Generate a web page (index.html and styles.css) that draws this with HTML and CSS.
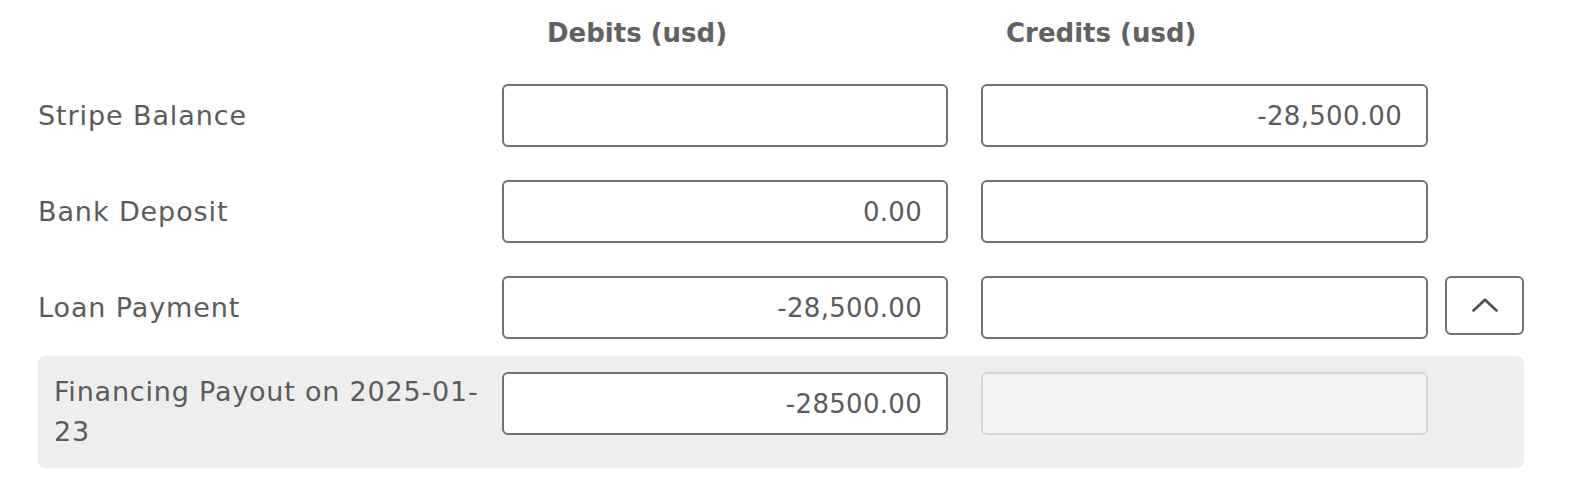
FILE: index.html
```html
<!DOCTYPE html>
<html lang="en">
<head>
<meta charset="utf-8">
<title>Ledger entries</title>
<link rel="stylesheet" href="styles.css">
</head>
<body>
<div class="ledger">
  <div class="row head">
    <div></div>
    <div class="colhead debit">Debits (usd)</div>
    <div class="colhead credit">Credits (usd)</div>
    <div></div>
  </div>

  <div class="row">
    <div class="label">Stripe Balance</div>
    <div class="cell"><input class="amount" type="text" value=""></div>
    <div class="cell credit"><input class="amount" type="text" value="-28,500.00"></div>
    <div></div>
  </div>

  <div class="row">
    <div class="label">Bank Deposit</div>
    <div class="cell"><input class="amount" type="text" value="0.00"></div>
    <div class="cell credit"><input class="amount" type="text" value=""></div>
    <div></div>
  </div>

  <div class="row">
    <div class="label">Loan Payment</div>
    <div class="cell"><input class="amount" type="text" value="-28,500.00"></div>
    <div class="cell credit"><input class="amount" type="text" value=""></div>
    <div class="cell"><button class="toggle" type="button" aria-label="Collapse">
      <svg width="26" height="14" viewBox="0 0 26 14"><polyline points="1.5,12.5 13,1.8 24.5,12.5" fill="none" stroke="#4b505d" stroke-width="2.6" stroke-linecap="round" stroke-linejoin="round"/></svg>
    </button></div>
  </div>

  <div class="row panel">
    <div class="label">Financing Payout on 2025-01-<br>23</div>
    <div class="cell"><input class="amount" type="text" value="-28500.00"></div>
    <div class="cell credit"><input class="amount disabled" type="text" value="" disabled></div>
    <div></div>
  </div>
</div>
</body>
</html>
```

FILE: styles.css
```css
html, body {
  margin: 0;
  padding: 0;
  background: #ffffff;
}

body {
  font-family: "DejaVu Sans", "Open Sans", sans-serif;
  color: #5b5b5b;
}

.ledger {
  padding-left: 38px;
  width: 1486px;
}

.row {
  display: grid;
  grid-template-columns: 447px 446px 463px 79px;
  column-gap: 17px;
  padding: 16px 0 17px 0;
}

.row.head {
  height: 68px;
  box-sizing: border-box;
  padding: 0 0 3px 0;
  align-items: center;
}

.colhead {
  font-weight: bold;
  font-size: 26px;
  color: #626262;
}

.colhead.debit {
  padding-left: 45px;
}

.colhead.credit {
  padding-left: 41px;
}

.label {
  align-self: center;
  font-size: 27px;
  letter-spacing: 0.9px;
  line-height: 40px;
  color: #5b5b5b;
}

.cell {
  display: flex;
  align-items: flex-start;
}

.cell.credit {
  padding-left: 16px;
}

.amount {
  box-sizing: border-box;
  width: 100%;
  height: 63px;
  margin: 0;
  border: 2px solid #6d717c;
  border-radius: 6px;
  background: #ffffff;
  padding: 0 24px;
  text-align: right;
  font-family: "DejaVu Sans", "Open Sans", sans-serif;
  font-size: 26px;
  letter-spacing: 0.3px;
  color: #5b5b5b;
  outline: none;
}

.amount.disabled {
  background: #f3f3f3;
  border-color: #d3d5da;
}

.toggle {
  box-sizing: border-box;
  width: 79px;
  height: 59px;
  margin: 0;
  padding: 0;
  border: 2px solid #6d717c;
  border-radius: 6px;
  background: #ffffff;
  display: flex;
  align-items: center;
  justify-content: center;
  cursor: pointer;
}

.toggle svg {
  display: block;
  margin-top: -2px;
}

.row.panel {
  background: #eeeeee;
  border-radius: 7px;
  padding: 16px 0;
}

.row.panel .label {
  align-self: start;
  padding-left: 16px;
  letter-spacing: 0.8px;
}
```
